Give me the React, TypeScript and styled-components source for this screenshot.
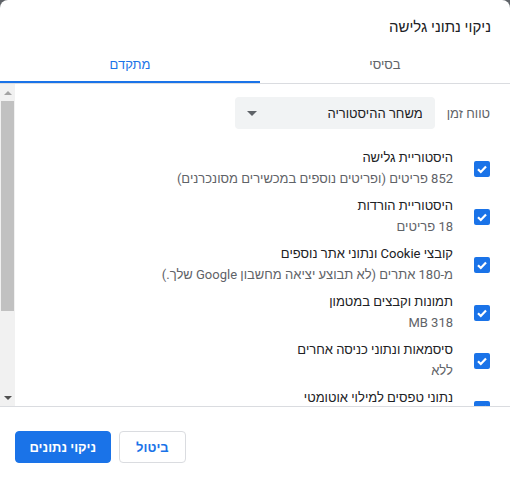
import React from 'react';
import styled, { createGlobalStyle } from 'styled-components';

const GlobalStyle = createGlobalStyle`
  html, body {
    margin: 0;
    padding: 0;
    background: #5f6368;
  }
  body {
    font-family: Roboto, "Liberation Sans", Arial, sans-serif;
  }
`;

type Item = {
  title: string;
  detail: string;
};

const items: Item[] = [
  { title: 'היסטוריית גלישה', detail: '852 פריטים (ופריטים נוספים במכשירים מסונכרנים)' },
  { title: 'היסטוריית הורדות', detail: '18 פריטים' },
  { title: 'קובצי Cookie ונתוני אתר נוספים', detail: 'מ-180 אתרים (לא תבוצע יציאה מחשבון Google שלך.)' },
  { title: 'תמונות וקבצים במטמון', detail: 'MB 318' },
  { title: 'סיסמאות ונתוני כניסה אחרים', detail: 'ללא' },
  { title: 'נתוני טפסים למילוי אוטומטי', detail: 'ללא' },
  { title: 'הגדרות אתר', detail: 'אין' },
  { title: 'נתוני אפליקציה מתארחת', detail: 'אפליקציה אחת (חנות האינטרנט של Chrome)' },
];

const Dialog = styled.div`
  direction: rtl;
  width: 510px;
  height: 479px;
  background: #fff;
  border-radius: 8px 8px 0 0;
  display: flex;
  flex-direction: column;
  overflow: hidden;
`;

const Title = styled.h1`
  margin: 0;
  padding: 17px 19px 0 20px;
  height: 33px;
  font-size: 15px;
  font-weight: 400;
  color: #202124;
  line-height: 20px;
`;

const Tabs = styled.div`
  display: grid;
  grid-template-columns: 250px 260px;
  border-bottom: 1px solid #dadce0;
`;

const Tab = styled.div<{ $active?: boolean }>`
  height: 33px;
  box-sizing: border-box;
  padding-top: 7px;
  text-align: center;
  font-size: 13px;
  font-weight: 500;
  color: ${({ $active }) => ($active ? '#1a73e8' : '#5f6368')};
  border-bottom: 2px solid ${({ $active }) => ($active ? '#1a73e8' : 'transparent')};
`;

const Body = styled.div`
  height: 322px;
  display: flex;
  border-bottom: 1px solid #dadce0;
`;

const Viewport = styled.div`
  flex: 1;
  overflow: hidden;
`;

const Scrollbar = styled.div`
  flex: none;
  width: 15px;
  background: #f1f1f1;
  display: flex;
  flex-direction: column;
  align-items: center;
`;

const ScrollButton = styled.div<{ $down?: boolean; $disabled?: boolean }>`
  height: 17px;
  width: 15px;
  display: flex;
  align-items: center;
  justify-content: center;

  &::after {
    content: '';
    width: 0;
    height: 0;
    border-left: 4px solid transparent;
    border-right: 4px solid transparent;
    ${({ $down, $disabled }) => {
      const color = $disabled ? '#a3a3a3' : '#505050';
      return $down ? `border-top: 4px solid ${color};` : `border-bottom: 4px solid ${color};`;
    }}
  }
`;

const Thumb = styled.div`
  width: 13px;
  background: #c1c1c1;
`;

const Spacer = styled.div`
  flex: 1;
`;

const Content = styled.div`
  padding: 13px 20px 8px 5px;
`;

const RangeRow = styled.div`
  display: flex;
  align-items: center;
  gap: 12px;
  margin-bottom: 19px;
`;

const Label = styled.span`
  font-size: 13px;
  color: #5f6368;
`;

const Select = styled.div`
  width: 200px;
  height: 32px;
  box-sizing: border-box;
  background: #f1f3f4;
  border-radius: 4px;
  display: flex;
  align-items: center;
  justify-content: space-between;
  padding: 0 12px 0 12px;
  font-size: 13px;
  color: #202124;
`;

const Arrow = styled.span`
  width: 0;
  height: 0;
  border-left: 5px solid transparent;
  border-right: 5px solid transparent;
  border-top: 5px solid #5f6368;
`;

const List = styled.div`
  display: flex;
  flex-direction: column;
  gap: 7px;
`;

const Row = styled.label`
  display: flex;
  align-items: center;
  gap: 21px;
`;

const Box = styled.span`
  flex: none;
  width: 16px;
  height: 16px;
  border-radius: 2px;
  background: #1a73e8;
  display: flex;
  align-items: center;
  justify-content: center;
`;

const Texts = styled.div`
  display: flex;
  flex-direction: column;
  gap: 1px;
  font-size: 13px;
  line-height: 20px;
`;

const ItemTitle = styled.span`
  color: #202124;
`;

const ItemDetail = styled.span`
  color: #5f6368;
`;

const Footer = styled.div`
  display: flex;
  justify-content: flex-end;
  gap: 8px;
  padding: 24px 15px 16px;
`;

const Button = styled.button<{ $primary?: boolean }>`
  height: 32px;
  box-sizing: border-box;
  border-radius: 4px;
  font-family: Roboto, "Liberation Sans", Arial, sans-serif;
  font-size: 13px;
  font-weight: 700;
  cursor: pointer;
  padding: ${({ $primary }) => ($primary ? '0 13.5px' : '0 16.5px')};
  border: 1px solid ${({ $primary }) => ($primary ? '#1a73e8' : '#dadce0')};
  background: ${({ $primary }) => ($primary ? '#1a73e8' : '#fff')};
  color: ${({ $primary }) => ($primary ? '#fff' : '#1a73e8')};
`;

const Check = () => (
  <svg width="12" height="12" viewBox="0 0 12 12">
    <path d="M2 6.2 L4.8 9 L10 3.4" fill="none" stroke="#fff" strokeWidth="2.2" />
  </svg>
);

const App: React.FC = () => (
  <>
    <GlobalStyle />
    <Dialog>
      <Title>ניקוי נתוני גלישה</Title>
      <Tabs>
        <Tab>בסיסי</Tab>
        <Tab $active>מתקדם</Tab>
      </Tabs>
      <Body>
        <Viewport>
          <Content>
            <RangeRow>
              <Label>טווח זמן</Label>
              <Select>
                <span>משחר ההיסטוריה</span>
                <Arrow />
              </Select>
            </RangeRow>
            <List>
              {items.map((item) => (
                <Row key={item.title}>
                  <Box>
                    <Check />
                  </Box>
                  <Texts>
                    <ItemTitle>{item.title}</ItemTitle>
                    <ItemDetail>{item.detail}</ItemDetail>
                  </Texts>
                </Row>
              ))}
            </List>
          </Content>
        </Viewport>
        <Scrollbar>
          <ScrollButton $disabled />
          <Thumb style={{ height: 210 }} />
          <Spacer />
          <ScrollButton $down />
        </Scrollbar>
      </Body>
      <Footer>
        <Button>ביטול</Button>
        <Button $primary>ניקוי נתונים</Button>
      </Footer>
    </Dialog>
  </>
);

export default App;
